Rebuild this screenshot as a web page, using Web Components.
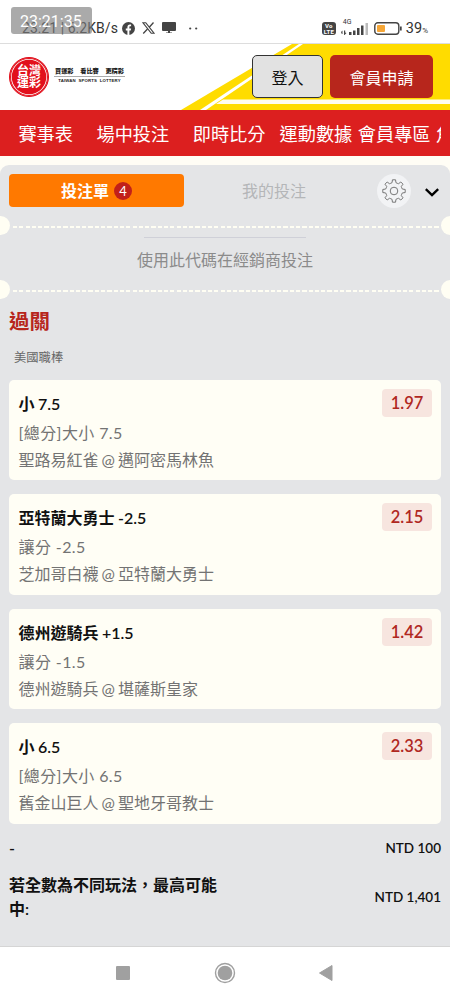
<!DOCTYPE html>
<html lang="zh-Hant">
<head>
<meta charset="utf-8">
<meta name="viewport" content="width=device-width, initial-scale=1">
<title>台灣運彩</title>
<style>
  body {
    margin: 0;
    width: 450px;
    height: 1000px;
    overflow: hidden;
    background: #fffdf5;
    font-family: Lato, "Noto Sans CJK TC", sans-serif;
    font-size: 16px;
    color: #111;
  }
</style>
</head>
<body>
<sports-app></sports-app>

<script>
class StatusBar extends HTMLElement {
  connectedCallback() {
    this.attachShadow({ mode: 'open' });
    this.shadowRoot.innerHTML = `
      <style>
        :host {
          display: flex;
          position: relative;
          box-sizing: border-box;
          height: 44px;
          padding: 12px 22px 0;
          background: #fff;
          border-bottom: 1px solid #ddd;
          font-family: Roboto, sans-serif;
          color: #333;
          justify-content: space-between;
        }
        .group { display: flex; align-items: center; height: 32px; }
        .clock { font-size: 14px; width: 97px; letter-spacing: 0.050px; white-space: nowrap; }
        svg { display: block; flex: none; }
        .fb { margin-left: 3px; }
        .x { margin-left: 7px; }
        .tv { margin-left: 7px; }
        .dots { margin-left: 13px; }
        .volte {
          width: 14px; height: 13px;
          border-radius: 3px;
          background: #444; color: #fff;
          font: bold 6px/6px Roboto, sans-serif;
          text-align: center;
          letter-spacing: 0.2px;
          padding-top: 1px;
          box-sizing: border-box;
          margin-right: 5px;
        }
        .signal { display: flex; flex-direction: column; margin-right: 4px; height: 17px; width: 29px; margin-top: -5px; }
        .signal span { font-size: 7px; line-height: 7px; margin-left: 2px; margin-top: 2px; }
        .signal svg { margin-top: -4px; }
        .pct { font-size: 14.5px; margin-left: 4px; }
        .pct small { font-size: 8px; }
        .timer {
          position: absolute;
          left: 11px; top: 7px;
          width: 81px; height: 27px;
          border-radius: 3px;
          background: rgba(125, 125, 125, 0.65);
          color: #fff;
          font-size: 16px; line-height: 29px;
          text-indent: 9px;
        }
      </style>
      <div class="group">
        <span class="clock">23:21 | 6.2KB/s</span>
        <svg class="fb" width="13" height="13" viewBox="0 0 24 24"><circle cx="12" cy="12" r="12" fill="#444"/><path d="M10 24v-8.500H7v-3.700h3V9.300C10 6.300 11.800 4.600 14.500 4.600c1 0 2.300.2 2.300.2v2.900h-1.500c-1.300 0-1.700.8-1.700 1.700v2.400h3.200l-.6 3.700h-2.600V24z" fill="#fff"/></svg>
        <svg class="x" width="13" height="12" viewBox="0 0 26 24" fill="none" stroke="#444"><path d="M2 1.500h5.500L24 22.500h-5.500z" stroke-width="2.400"/><path d="M23 1L14.500 10.600M11 14L2.500 23" stroke-width="2.600"/></svg>
        <svg class="tv" width="14" height="12" viewBox="0 0 14 12" fill="#444"><path d="M1 0h12a1 1 0 0 1 1 1v7a1 1 0 0 1-1 1H8v1.500h2V11H4v-.5h2V9H1a1 1 0 0 1-1-1V1a1 1 0 0 1 1-1z"/></svg>
        <svg class="dots" width="9" height="3" viewBox="0 0 9 3" fill="#444"><circle cx="1.200" cy="1.500" r="1.100"/><circle cx="7.200" cy="1.500" r="1.100"/></svg>
      </div>
      <div class="group">
        <div class="volte">Vo<br>LTE</div>
        <div class="signal">
          <span>4G</span>
          <svg width="29" height="13" viewBox="0 0 29 13" fill="#444"><path d="M0 10l1.500-1.500V12H.8zM3 8.500h1.200v2L5.500 11 3.500 13H3z"/><path d="M8 10h2.500v3H8zM12 8.500h2.500V13H12zM16 6h2.500v7H16zM20 3.500h2.500V13H20z"/><path d="M24.500 1H27v12h-2.500z" fill="#bbb"/></svg>
        </div>
        <svg width="28" height="13" viewBox="0 0 28 13"><rect x=".8" y=".8" width="24" height="11.400" rx="3" fill="none" stroke="#444" stroke-width="1.400"/><rect x="3" y="3" width="8" height="7" rx="1" fill="#f5a637"/><path d="M26 4.500h1.700v4H26z" fill="#444"/></svg>
        <span class="pct">39<small>%</small></span>
      </div>
      <div class="timer">23:21:35</div>
    `;
  }
}
customElements.define('status-bar', StatusBar);

class SiteHeader extends HTMLElement {
  connectedCallback() {
    this.attachShadow({ mode: 'open' });
    this.shadowRoot.innerHTML = `
      <style>
        :host {
          display: flex;
          position: relative;
          height: 66px;
          background: #fff;
          align-items: flex-start;
          overflow: hidden;
        }
        .stripes { position: absolute; left: 0; top: 0; }
        .seal {
          position: relative;
          display: flex; flex-direction: column;
          align-items: center; justify-content: center;
          box-sizing: border-box;
          width: 40px; height: 40px;
          margin: 12.500px 0 0 9px;
          border-radius: 50%;
          border: 1px solid #e2101c;
          background: #e2101c;
          box-shadow: inset 0 0 0 1px #e2101c, inset 0 0 0 1.700px #fff;
          color: #fff;
          font-size: 12px; line-height: 12px;
          font-weight: bold;
        }
        .seal span { height: 12px; }
        .words { position: relative; width: 71px; margin: 22px 0 0 5px; color: #222; }
        .zh {
          display: flex; justify-content: space-between;
          font-size: 6.200px; line-height: 9px;
          font-weight: 900;
          padding: 0 1px 0;
          height: 10px;
          border-bottom: 1px solid #aaa;
        }
        .en {
          font: bold 4.300px/6px "Liberation Sans", sans-serif;
          padding-top: 1px;
          text-align: center;
          white-space: nowrap;
          letter-spacing: 0.150px;
        }
        button {
          position: relative;
          box-sizing: border-box;
          height: 43px;
          margin-top: 11px;
          padding: 0;
          border-radius: 5px;
          font: 16px Lato, "Noto Sans CJK TC", sans-serif;
        }
        .login { width: 71px; margin-left: auto; background: #e2e2e2; border: 1px solid #333; color: #111; }
        .join { width: 103px; margin-left: 7px; margin-right: 17px; background: #b7261c; border: 0; color: #fff; }
      </style>
      <svg class="stripes" width="450" height="66" viewBox="0 0 450 66">
        <path d="M181 66L292 0H450V66z" fill="#ffdc00"/>
        <path d="M200 66L299 0H303L206 66z" fill="#fff"/>
        <path d="M216 60L223 55.500H450V60z" fill="#fffdf0"/>
      </svg>
      <div class="seal"><span>台灣</span><span>運彩</span></div>
      <div class="words">
        <div class="zh"><span>買運彩</span><span>看比賽</span><span>更精彩</span></div>
        <div class="en">TAIWAN&nbsp; SPORTS&nbsp; LOTTERY</div>
      </div>
      <button class="login">登入</button>
      <button class="join">會員申請</button>
    `;
  }
}
customElements.define('site-header', SiteHeader);

class MainNav extends HTMLElement {
  connectedCallback() {
    this.attachShadow({ mode: 'open' });
    this.shadowRoot.innerHTML = `
      <style>
        :host {
          display: block;
          height: 46px;
          background: #dc1f1f;
        }
        nav {
          display: flex;
          width: 423px;
          height: 46px;
          margin-left: 18.400px;
          overflow: hidden;
          white-space: nowrap;
          color: #fff;
          font-size: 18.200px;
          line-height: 48px;
        }
        span { flex: none; margin-right: 23.500px; }
        .near { margin-right: 14px; }
        .tight { margin-right: 5.500px; }
      </style>
      <nav>
        <span>賽事表</span>
        <span>場中投注</span>
        <span class="near">即時比分</span>
        <span class="tight">運動數據</span>
        <span class="tight">會員專區</span>
        <span>角</span>
      </nav>
    `;
  }
}
customElements.define('main-nav', MainNav);

class SlipTabs extends HTMLElement {
  connectedCallback() {
    this.attachShadow({ mode: 'open' });
    this.shadowRoot.innerHTML = `
      <style>
        :host { display: flex; align-items: center; height: 33px; padding: 9px 9px 0; }
        .tab {
          display: flex; align-items: center; justify-content: center;
          width: 175px; height: 33px;
          border-radius: 4px;
          line-height: 33px;
        }
        .active { background: #ff7900; color: #fff; font-weight: bold; }
        .idle { margin-left: 2px; width: 176px; color: #b4b6b8; }
        .count {
          width: 18px; height: 18px;
          margin-left: 5px;
          border-radius: 50%;
          background: #c1201a;
          font-size: 13px; line-height: 18px;
          font-weight: normal;
          text-align: center;
        }
        .gear {
          display: flex; align-items: center; justify-content: center;
          width: 34px; height: 34px;
          margin-left: 15px;
          border-radius: 50%;
          background: #f2f3f5;
        }
        .chevron { margin: 3px 0 0 14px; }
        .chevron, .gear { flex: none; }
      </style>
      <div class="tab active">投注單<span class="count">4</span></div>
      <div class="tab idle">我的投注</div>
      <div class="gear">
        <svg width="24" height="24" viewBox="0 0 24 24" fill="none" stroke="#777" stroke-width="1" stroke-linejoin="round">
          <path id="cog"/>
          <circle cx="12" cy="12" r="3.800"/>
        </svg>
      </div>
      <svg class="chevron" width="14" height="9" viewBox="0 0 14 9" fill="none" stroke="#000" stroke-width="2.400"><path d="M.8 1.200L7 7.200 13.200 1.200"/></svg>
    `;
    // eight rounded teeth around the hub
    let d = '';
    const point = (r, deg) => {
      const a = deg * Math.PI / 180;
      return (12 + r * Math.cos(a)).toFixed(2) + ' ' + (12 + r * Math.sin(a)).toFixed(2);
    };
    for (let i = 0; i < 8; i++) {
      const a = i * 45;
      d += (i ? 'L' : 'M') + point(8.6, a - 13) + 'L' + point(11.3, a - 8);
      d += 'L' + point(11.3, a + 8) + 'L' + point(8.6, a + 13);
      d += 'Q' + point(8.2, a + 22.5) + ' ' + point(8.6, a + 32);
    }
    this.shadowRoot.getElementById('cog').setAttribute('d', d + 'Z');
  }
}
customElements.define('slip-tabs', SlipTabs);

class TicketCut extends HTMLElement {
  connectedCallback() {
    this.attachShadow({ mode: 'open' });
    this.shadowRoot.innerHTML = `
      <style>
        :host { display: flex; height: 19px; align-items: center; overflow: hidden; }
        i { width: 19px; height: 19px; border-radius: 50%; background: #fffef3; flex: none; }
        .left { margin-left: -9.500px; }
        .right { margin-right: -10px; }
        .dash {
          flex: 1; height: 2px;
          margin: 2px 0 0 3px;
          background: repeating-linear-gradient(90deg, #fffef3 0 4.200px, transparent 4.200px 6.290px);
        }
      </style>
      <i class="left"></i><div class="dash"></div><i class="right"></i>
    `;
  }
}
customElements.define('ticket-cut', TicketCut);

class BetCard extends HTMLElement {
  connectedCallback() {
    this.attachShadow({ mode: 'open' });
    this.shadowRoot.innerHTML = `
      <style>
        :host {
          display: flex;
          box-sizing: border-box;
          height: 100.400px;
          padding: 9px 9px 0 9.500px;
          border-radius: 5px;
          background: #fffef5;
          justify-content: space-between;
          align-items: flex-start;
        }
        .title { font-weight: 600; line-height: 30px; color: #111; word-spacing: -0.500px; }
        .line { line-height: 26px; color: #737373; word-spacing: -1px; }
        .market { letter-spacing: 0.400px; line-height: 28px; word-spacing: 0; }
        .odds {
          width: 50px; height: 28px;
          border-radius: 4px;
          background: #f7e5df;
          color: #b0281f;
          font-size: 16.500px; line-height: 28px;
          font-weight: 600;
          text-align: center;
        }
      </style>
      <div>
        <div class="title"><slot name="pick"></slot></div>
        <div class="line market"><slot name="market"></slot></div>
        <div class="line"><slot name="match"></slot></div>
      </div>
      <div class="odds"><slot name="odds"></slot></div>
    `;
  }
}
customElements.define('bet-card', BetCard);

class SlipTotal extends HTMLElement {
  connectedCallback() {
    this.attachShadow({ mode: 'open' });
    this.shadowRoot.innerHTML = `
      <style>
        :host { display: flex; align-items: center; justify-content: space-between; font-weight: 600; line-height: 24px; }
        .label { width: 216px; }
        .sum { font-size: 13.500px; }
      </style>
      <div class="label"><slot></slot></div>
      <div class="sum"><slot name="sum"></slot></div>
    `;
  }
}
customElements.define('slip-total', SlipTotal);

class BetSlip extends HTMLElement {
  connectedCallback() {
    this.attachShadow({ mode: 'open' });
    this.shadowRoot.innerHTML = `
      <style>
        :host {
          display: block;
          box-sizing: border-box;
          height: 782px;
          margin-top: 9px;
          border-radius: 9px 9px 0 0;
          background: #e4e5e7;
          border-bottom: 1px solid #d5d5d5;
        }
        .first { margin-top: 9px; }
        .code { height: 43px; padding-top: 2px; text-align: center; color: #8b8b8b; line-height: 44px; }
        .code::before { content: ""; display: block; width: 162px; height: 1px; margin: 0 auto; background: #cfd0d8; }
        h2 { margin: 7px 9px 0; font-size: 20.500px; line-height: 30px; color: #b7261c; }
        .league { margin: 10px 14px 0; font-size: 12.300px; line-height: 24px; color: #666; }
        .cards { display: flex; flex-direction: column; gap: 14px; margin: 10px 9px 0; }
        .totals { display: flex; flex-direction: column; gap: 12.500px; margin: 12.500px 9px 0; }
      </style>
      <slip-tabs></slip-tabs>
      <ticket-cut class="first"></ticket-cut>
      <div class="code">使用此代碼在經銷商投注</div>
      <ticket-cut></ticket-cut>
      <h2>過關</h2>
      <div class="league">美國職棒</div>
      <div class="cards">
        <bet-card>
          <span slot="pick">小 7.5</span><span slot="market">[總分]大小 7.5</span>
          <span slot="match">聖路易紅雀 @ 邁阿密馬林魚</span><span slot="odds">1.97</span>
        </bet-card>
        <bet-card>
          <span slot="pick">亞特蘭大勇士 -2.5</span><span slot="market">讓分 -2.5</span>
          <span slot="match">芝加哥白襪 @ 亞特蘭大勇士</span><span slot="odds">2.15</span>
        </bet-card>
        <bet-card>
          <span slot="pick">德州遊騎兵 +1.5</span><span slot="market">讓分 -1.5</span>
          <span slot="match">德州遊騎兵 @ 堪薩斯皇家</span><span slot="odds">1.42</span>
        </bet-card>
        <bet-card>
          <span slot="pick">小 6.5</span><span slot="market">[總分]大小 6.5</span>
          <span slot="match">舊金山巨人 @ 聖地牙哥教士</span><span slot="odds">2.33</span>
        </bet-card>
      </div>
      <div class="totals">
        <slip-total>-<span slot="sum">NTD 100</span></slip-total>
        <slip-total>若全數為不同玩法，最高可能中:<span slot="sum">NTD 1,401</span></slip-total>
      </div>
    `;
  }
}
customElements.define('bet-slip', BetSlip);

class AndroidNav extends HTMLElement {
  connectedCallback() {
    this.attachShadow({ mode: 'open' });
    this.shadowRoot.innerHTML = `
      <style>
        :host { display: flex; box-sizing: border-box; height: 53px; padding-bottom: 2px; background: #fff; align-items: center; justify-content: center; gap: 83px; }
        .recent { margin: 0 1px 0 -1px; }
      </style>
      <svg class="recent" width="14" height="14" fill="#a0a0a0"><rect width="14" height="14" rx="1"/></svg>
      <svg width="22" height="22" viewBox="0 0 22 22"><circle cx="11" cy="11" r="9.500" fill="none" stroke="#a0a0a0" stroke-width="1.400"/><circle cx="11" cy="11" r="7.300" fill="#a0a0a0"/></svg>
      <svg width="14" height="16" viewBox="0 0 14 16" fill="#a0a0a0"><path d="M13 .5v15L.5 8z" stroke="#a0a0a0" stroke-linejoin="round"/></svg>
    `;
  }
}
customElements.define('android-nav', AndroidNav);

class SportsApp extends HTMLElement {
  connectedCallback() {
    this.attachShadow({ mode: 'open' });
    this.shadowRoot.innerHTML = `
      <style>
        :host { display: flex; flex-direction: column; height: 1000px; }
        status-bar, site-header, main-nav, bet-slip, android-nav { flex: none; }
      </style>
      <status-bar></status-bar>
      <site-header></site-header>
      <main-nav></main-nav>
      <bet-slip></bet-slip>
      <android-nav></android-nav>
    `;
  }
}
customElements.define('sports-app', SportsApp);
</script>
</body>
</html>
